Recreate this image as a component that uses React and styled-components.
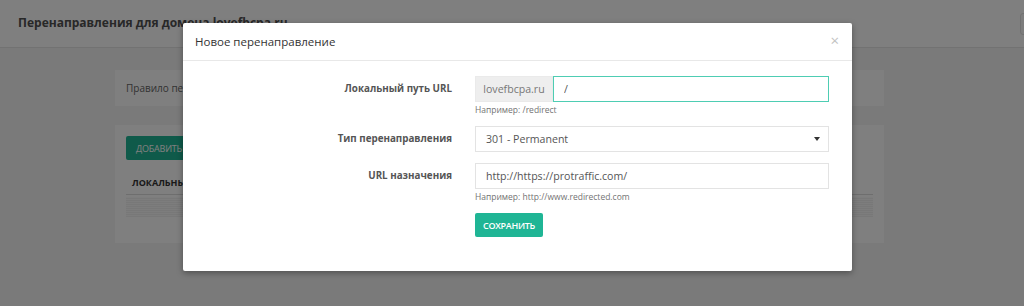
import React from "react";
import styled, { createGlobalStyle } from "styled-components";

const GlobalStyle = createGlobalStyle`
  html, body {
    margin: 0;
    padding: 0;
    height: 306px;
    overflow: hidden;
  }
  body {
    font-family: "Open Sans", "Noto Sans", "DejaVu Sans", sans-serif;
    background: #f4f4f4;
  }
  * {
    box-sizing: border-box;
  }
`;

const primary = "#1fb595";

function App() {
  return (
    <>
      <GlobalStyle />
      <Page>
        <TopBar>
          <PageTitle>Перенаправления для домена lovefbcpa.ru</PageTitle>
          <TopAction />
        </TopBar>
        <Content>
          <Panel $flat>
            <PanelText>Правило перенаправления для домена</PanelText>
          </Panel>
          <Panel>
            <AddButton>ДОБАВИТЬ ПЕРЕНАПРАВЛЕНИЕ</AddButton>
            <TableHead>ЛОКАЛЬНЫЙ ПУТЬ</TableHead>
            <StripedRow />
          </Panel>
        </Content>

        <Backdrop />
        <Modal>
          <ModalHeader>
            <ModalTitle>Новое перенаправление</ModalTitle>
            <Close>×</Close>
          </ModalHeader>
          <ModalBody>
            <Row>
              <Label>Локальный путь URL</Label>
              <Field>
                <InputGroup>
                  <Addon>lovefbcpa.ru</Addon>
                  <Input $focused $grow defaultValue="/" />
                </InputGroup>
                <Help>Например: /redirect</Help>
              </Field>
            </Row>
            <Row>
              <Label>Тип перенаправления</Label>
              <Field>
                <SelectBox>
                  <span>301 - Permanent</span>
                  <Caret />
                </SelectBox>
              </Field>
            </Row>
            <Row>
              <Label>URL назначения</Label>
              <Field>
                <Input defaultValue="http://https://protraffic.com/" />
                <Help>Например: http://www.redirected.com</Help>
              </Field>
            </Row>
            <Row>
              <span />
              <Field>
                <SaveButton>СОХРАНИТЬ</SaveButton>
              </Field>
            </Row>
          </ModalBody>
        </Modal>
      </Page>
    </>
  );
}

const Page = styled.div`
  position: relative;
  height: 306px;
  overflow: hidden;
  background: #f4f4f4;
`;

const TopBar = styled.header`
  height: 48px;
  background: #fff;
  border-bottom: 1px solid #e4e4e4;
  display: flex;
  align-items: center;
  justify-content: space-between;
  padding: 0 0 0 18px;
`;

const PageTitle = styled.h1`
  margin: 0 0 2px;
  font-size: 12px;
  font-weight: 700;
  color: #505050;
`;

const TopAction = styled.div`
  width: 30px;
  height: 22px;
  margin-right: -26px;
  border-radius: 3px;
  border: 1px solid #e2e2e2;
  background: #fafafa;
`;

const Content = styled.main`
  width: 769px;
  margin-left: 115px;
  padding-top: 22px;
  display: flex;
  flex-direction: column;
  gap: 19px;
`;

const Panel = styled.section`
  background: #fff;
  padding: ${(p) => (p.$flat ? "0 11px" : "11px 11px 26px")};
  height: ${(p) => (p.$flat ? "36px" : "118px")};
  display: flex;
  flex-direction: column;
  align-items: flex-start;
`;

const PanelText = styled.p`
  margin: 0;
  line-height: 36px;
  font-size: 10px;
  color: #666;
`;

const AddButton = styled.button`
  height: 24px;
  padding: 0 10px;
  border: 0;
  border-radius: 2px;
  background: ${primary};
  color: #fff;
  font-family: inherit;
  font-size: 9px;
  letter-spacing: -0.2px;
`;

const TableHead = styled.div`
  align-self: stretch;
  margin-top: 10px;
  padding: 0 6px;
  height: 25px;
  line-height: 25px;
  border-bottom: 1px solid #ddd;
  font-size: 9px;
  font-weight: 700;
  color: #333;
`;

const StripedRow = styled.div`
  align-self: stretch;
  margin-top: 2px;
  height: 20px;
  background: repeating-linear-gradient(
    0deg,
    #f0f0f0 0,
    #f0f0f0 1px,
    #fafafa 1px,
    #fafafa 2px
  );
`;

const Backdrop = styled.div`
  position: absolute;
  inset: 0;
  background: rgba(0, 0, 0, 0.5);
`;

const Modal = styled.div`
  position: absolute;
  top: 23px;
  left: 183px;
  width: 669px;
  background: #fff;
  border-radius: 2px;
  box-shadow: 0 2px 6px rgba(0, 0, 0, 0.35);
`;

const ModalHeader = styled.div`
  height: 38px;
  padding: 0 12px;
  border-bottom: 1px solid #e8e8e8;
  display: flex;
  align-items: center;
  justify-content: space-between;
`;

const ModalTitle = styled.h4`
  margin: 0;
  font-size: 11.5px;
  font-weight: 400;
  color: #333;
`;

const Close = styled.span`
  font-size: 15px;
  line-height: 1;
  color: #c2c2c2;
  margin-top: -2px;
  margin-right: 1px;
`;

const ModalBody = styled.div`
  padding: 15px 23px 23px 15px;
`;

const Row = styled.div`
  display: grid;
  grid-template-columns: 254px 354px;
  column-gap: 23px;
  margin-bottom: 11px;
`;

const Label = styled.label`
  text-align: right;
  line-height: 26px;
  font-size: 9.8px;
  font-weight: 700;
  color: #555;
`;

const Field = styled.div`
  display: flex;
  flex-direction: column;
  align-items: stretch;
`;

const InputGroup = styled.div`
  display: flex;
`;

const Addon = styled.span`
  width: 78px;
  height: 26px;
  flex-shrink: 0;
  background: #eee;
  border: 1px solid #eaeaea;
  color: #777;
  font-size: 10.6px;
  line-height: 24px;
  text-align: center;
`;

const Input = styled.input`
  flex: ${(p) => (p.$grow ? "1 1 auto" : "0 0 26px")};
  min-width: 0;
  height: 26px;
  padding: 0 10px;
  border: 1px solid ${(p) => (p.$focused ? "#4ecdb3" : "#e3e3e3")};
  border-radius: 0;
  outline: none;
  font-family: inherit;
  font-size: 10.6px;
  color: #555;
  background: #fff;
`;

const SelectBox = styled.div`
  height: 26px;
  padding: 0 10px;
  border: 1px solid #e3e3e3;
  display: flex;
  align-items: center;
  justify-content: space-between;
  font-size: 10.6px;
  color: #555;
`;

const Caret = styled.span`
  width: 0;
  height: 0;
  margin-right: -2px;
  border-left: 3px solid transparent;
  border-right: 3px solid transparent;
  border-top: 4px solid #333;
`;

const Help = styled.span`
  margin-top: 3px;
  line-height: 10px;
  font-size: 8.5px;
  color: #737373;
`;

const SaveButton = styled.button`
  align-self: flex-start;
  width: 68px;
  height: 24px;
  padding: 0;
  border: 0;
  border-radius: 2px;
  background: ${primary};
  color: #fff;
  font-family: inherit;
  font-size: 9px;
  font-weight: 600;
  letter-spacing: -0.3px;
`;

export default App;
